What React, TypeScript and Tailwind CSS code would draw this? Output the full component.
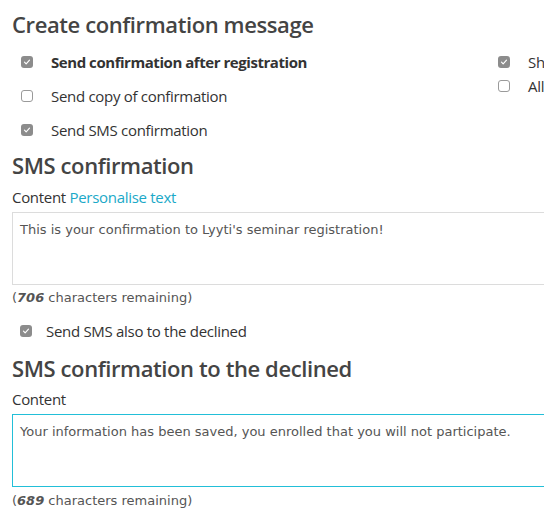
import React from 'react';

const sans = "font-['Open_Sans',sans-serif]";
const verdana = "font-['DejaVu_Sans',sans-serif]";

const Box = ({ checked }: { checked: boolean }) =>
  checked ? (
    <span className="flex h-[12px] w-[12px] shrink-0 items-center justify-center rounded-[3px] bg-[#8c8c8c]">
      <svg viewBox="0 0 12 12" className="h-[10px] w-[10px]">
        <path d="M3 6.2 L5 8.2 L9 3.8" fill="none" stroke="#fff" strokeWidth="1.4" strokeLinecap="round" strokeLinejoin="round" />
      </svg>
    </span>
  ) : (
    <span className="h-[12px] w-[12px] shrink-0 rounded-[3px] border border-[#9a9a9a] bg-white" />
  );

const Check = ({ checked, label, bold }: { checked: boolean; label: string; bold?: boolean }) => (
  <label className="flex h-[20px] items-center whitespace-nowrap">
    <Box checked={checked} />
    <span className={`ml-[18px] text-[15px] tracking-[-0.3px] text-[#333] ${bold ? 'font-bold tracking-[-0.45px]' : ''}`}>{label}</span>
  </label>
);

const Remaining = ({ n }: { n: number }) => (
  <p className={`${verdana} text-[13px] leading-[16px] text-[#555]`}>
    (<b className="italic">{n}</b> characters remaining)
  </p>
);

const heading = 'text-[22px] font-semibold leading-[32px] tracking-[-0.4px] text-[#444]';

export default function App() {
  return (
    <div className={`${sans} h-[519px] w-[544px] overflow-hidden bg-white pl-[12px] text-[#333]`}>
      <h2 className={`${heading} pt-[8px]`}>Create confirmation message</h2>

      <div className="mt-[12px] flex w-[700px] pl-[9px]">
        <div className="flex w-[477px] flex-col gap-[14px]">
          <Check checked label="Send confirmation after registration" bold />
          <Check checked={false} label="Send copy of confirmation" />
          <Check checked label="Send SMS confirmation" />
        </div>
        <div className="flex flex-col gap-[4px]">
          <Check checked label="Show" />
          <Check checked={false} label="Allow" />
        </div>
      </div>

      <h2 className={`${heading} mt-[9px]`}>SMS confirmation</h2>
      <p className="mt-[6px] text-[15px] leading-[20px] tracking-[-0.3px]">
        Content <span className="text-[#1ba9c8]">Personalise text</span>
      </p>
      <div className="mt-[5px] w-[560px]">
        <textarea
          readOnly
          defaultValue="This is your confirmation to Lyyti's seminar registration!"
          className={`${verdana} block h-[73px] w-full resize-none border border-[#dcdcdc] px-[7px] pt-[9px] text-[13px] leading-[16px] text-[#555] outline-none`}
        />
      </div>
      <div className="mt-[5px]">
        <Remaining n={706} />
      </div>

      <div className="mt-[15px] pl-[8px]">
        <label className="flex h-[20px] items-center">
          <Box checked />
          <span className="ml-[14px] text-[15px] tracking-[-0.3px]">Send SMS also to the declined</span>
        </label>
      </div>

      <h2 className={`${heading} mt-[11px]`}>SMS confirmation to the declined</h2>
      <p className="mt-[5px] text-[15px] leading-[20px] tracking-[-0.3px]">Content</p>
      <div className="mt-[5px] w-[560px]">
        <textarea
          readOnly
          defaultValue="Your information has been saved, you enrolled that you will not participate."
          className={`${verdana} block h-[73px] w-full resize-none border border-[#22bfd8] px-[7px] pt-[9px] text-[13px] leading-[16px] text-[#555] outline-none`}
        />
      </div>
      <div className="mt-[6px]">
        <Remaining n={689} />
      </div>
    </div>
  );
}
